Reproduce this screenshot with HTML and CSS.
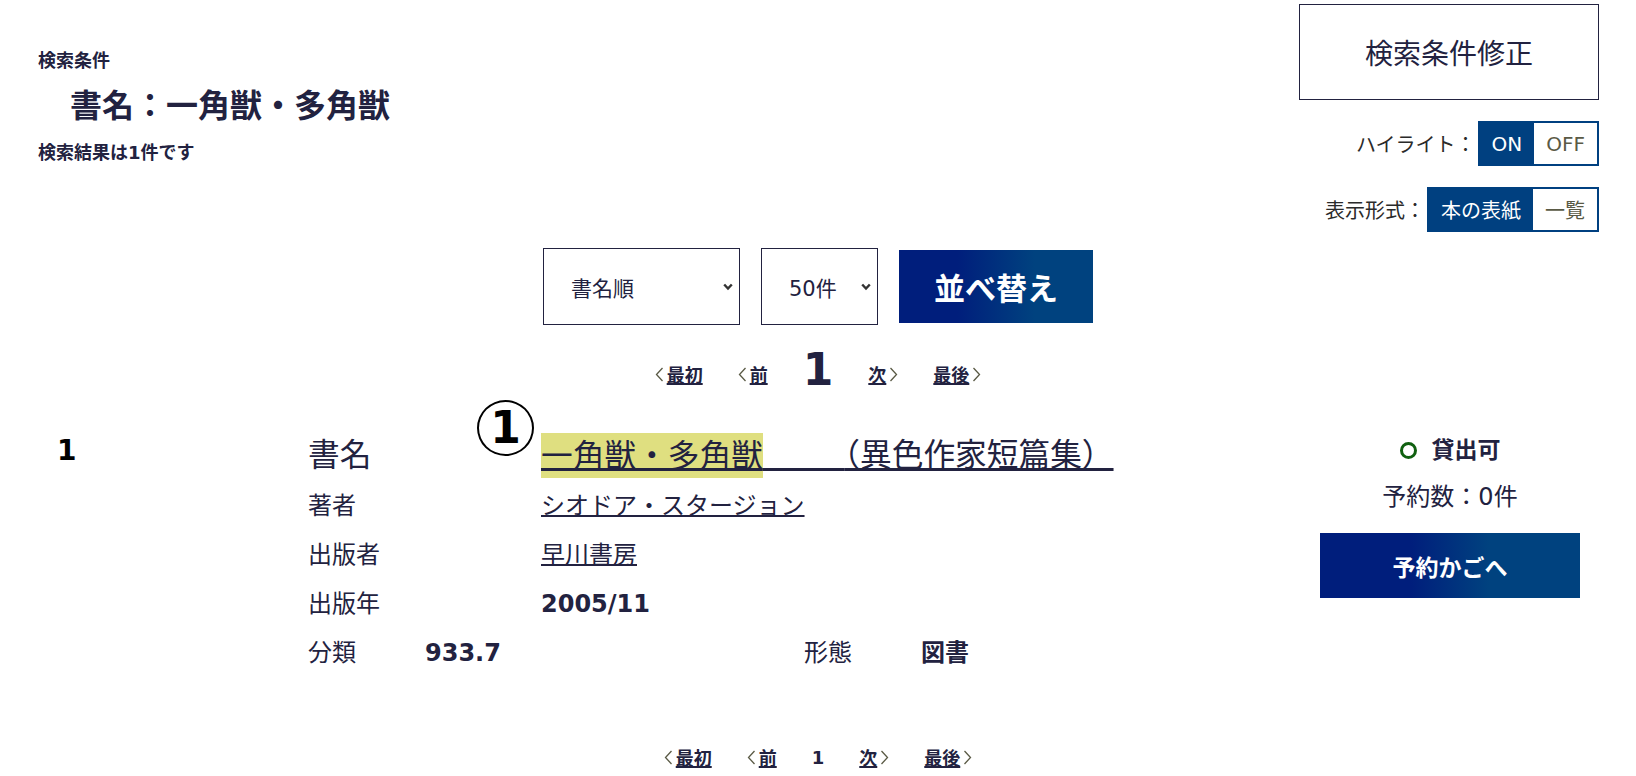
FILE: index.html
```html
<!DOCTYPE html>
<html lang="ja">
<head>
<meta charset="utf-8">
<title>検索結果一覧</title>
<link rel="stylesheet" href="styles.css">
</head>
<body>

<div class="head">
  <div class="cond">
    <div class="cond-caption">検索条件</div>
    <div class="cond-body">書名：一角獣・多角獣</div>
    <div class="cond-hits">検索結果は1件です</div>
  </div>
  <div class="tools">
    <a class="btn-edit" href="#">検索条件修正</a>
    <div class="switch-row">
      <span class="switch-name">ハイライト：</span>
      <span class="switch"><span class="sw-on">ON</span><span class="sw-off">OFF</span></span>
    </div>
    <div class="switch-row">
      <span class="switch-name">表示形式：</span>
      <span class="switch"><span class="sw-on">本の表紙</span><span class="sw-off">一覧</span></span>
    </div>
  </div>
</div>

<div class="sortbar">
  <div class="select sel-order"><span>書名順</span><svg class="chev" viewBox="0 0 10 8"><path d="M1.2 1.5 L5 5.6 L8.8 1.5"/></svg></div>
  <div class="select sel-count"><span>50件</span><svg class="chev" viewBox="0 0 10 8"><path d="M1.2 1.5 L5 5.6 L8.8 1.5"/></svg></div>
  <button class="btn-sort" type="button">並べ替え</button>
</div>

<div class="pager pager-top">
  <a class="pg" href="#"><svg class="arr" viewBox="0 0 9 15"><path d="M7.5 1 L1.5 7.5 L7.5 14"/></svg><span>最初</span></a>
  <a class="pg" href="#"><svg class="arr" viewBox="0 0 9 15"><path d="M7.5 1 L1.5 7.5 L7.5 14"/></svg><span>前</span></a>
  <span class="pg-cur">1</span>
  <a class="pg" href="#"><span>次</span><svg class="arr" viewBox="0 0 9 15"><path d="M1.5 1 L7.5 7.5 L1.5 14"/></svg></a>
  <a class="pg" href="#"><span>最後</span><svg class="arr" viewBox="0 0 9 15"><path d="M1.5 1 L7.5 7.5 L1.5 14"/></svg></a>
</div>

<div class="result">
  <div class="no">1</div>
  <div class="detail">
    <div class="row row-title">
      <span class="lbl">書名</span>
      <span class="val"><span class="mark">1</span><a class="ttl" href="#"><span class="hl">一角獣・多角獣</span><span class="sp">　　</span>（異色作家短篇集）</a></span>
    </div>
    <div class="row">
      <span class="lbl">著者</span>
      <span class="val"><a class="lnk" href="#">シオドア・スタージョン</a></span>
    </div>
    <div class="row">
      <span class="lbl">出版者</span>
      <span class="val"><a class="lnk" href="#">早川書房</a></span>
    </div>
    <div class="row">
      <span class="lbl">出版年</span>
      <span class="val strong">2005/11</span>
    </div>
    <div class="row">
      <span class="lbl-s">分類</span>
      <span class="val-w strong">933.7</span>
      <span class="lbl-s">形態</span>
      <span class="val strong">図書</span>
    </div>
  </div>
  <div class="status">
    <div class="avail"><span class="ring"></span>貸出可</div>
    <div class="resv">予約数：0件</div>
    <a class="btn-cart" href="#">予約かごへ</a>
  </div>
</div>

<div class="pager pager-bottom">
  <a class="pg" href="#"><svg class="arr" viewBox="0 0 9 15"><path d="M7.5 1 L1.5 7.5 L7.5 14"/></svg><span>最初</span></a>
  <a class="pg" href="#"><svg class="arr" viewBox="0 0 9 15"><path d="M7.5 1 L1.5 7.5 L7.5 14"/></svg><span>前</span></a>
  <span class="pg-cur">1</span>
  <a class="pg" href="#"><span>次</span><svg class="arr" viewBox="0 0 9 15"><path d="M1.5 1 L7.5 7.5 L1.5 14"/></svg></a>
  <a class="pg" href="#"><span>最後</span><svg class="arr" viewBox="0 0 9 15"><path d="M1.5 1 L7.5 7.5 L1.5 14"/></svg></a>
</div>

</body>
</html>
```

FILE: styles.css
```css
/* Search result list */

body
{ margin: 0;
font-family: "DejaVu Sans", "Noto Sans CJK JP", sans-serif;
color: #222240;
background: #fff;
}

a
{ color: inherit;
}

/* Header: search condition and view switches */

div.head
{ display: flex;
justify-content: space-between;
align-items: flex-start;
height: 232px;
}

div.cond
{ padding: 48px 0 0 38px;
font-weight: bold;
}

div.cond-caption, div.cond-hits
{ font-size: 18px;
line-height: 26px;
}

div.cond-body
{ margin: 10px 0 12px 32px;
font-size: 32px;
line-height: 44px;
}

div.tools
{ width: 300px;
margin: 4px 37px 0 0;
display: flex;
flex-direction: column;
align-items: flex-end;
gap: 21px;
}

a.btn-edit
{ display: flex;
align-items: center;
justify-content: center;
box-sizing: border-box;
width: 300px;
height: 96px;
border: 1px solid #222240;
font-size: 28px;
text-decoration: none;
}

div.switch-row
{ display: flex;
align-items: center;
gap: 2px;
font-size: 20px;
}

span.switch-name
{ color: #2a2a2a;
}

span.switch
{ display: flex;
box-sizing: border-box;
height: 45px;
border: 2px solid #004080;
}

span.sw-on, span.sw-off
{ display: flex;
align-items: center;
padding: 0 12px;
}

span.sw-on
{ background: #004080;
color: #fff;
}

span.sw-off
{ color: #5a5a45;
}

/* Sort controls */

div.sortbar
{ display: flex;
justify-content: center;
align-items: center;
gap: 21px;
margin-top: 16px;
}

div.select
{ display: flex;
align-items: center;
justify-content: space-between;
box-sizing: border-box;
height: 77px;
padding: 0 6px 0 27px;
border: 1px solid #222240;
font-size: 21px;
}

div.sel-order { width: 197px; }
div.sel-count { width: 117px; }

svg.chev
{ width: 10px;
height: 8px;
fill: none;
stroke: #333;
stroke-width: 2.4;
}

button.btn-sort
{ width: 194px;
height: 73px;
border: 0;
padding: 0;
background: linear-gradient(to right, #001e7c 30%, #00427f 70%);
color: #fff;
font-family: inherit;
font-size: 31px;
font-weight: bold;
}

/* Paging */

div.pager
{ display: flex;
justify-content: center;
align-items: center;
gap: 35px;
font-size: 18px;
font-weight: bold;
}

div.pager-top
{ height: 50px;
margin-top: 20px;
}

div.pager-top a.pg
{ padding-top: 8px;
}

div.pager-bottom
{ height: 30px;
margin-top: 64px;
}

a.pg
{ display: flex;
align-items: center;
gap: 3px;
text-decoration: none;
}

a.pg span
{ text-decoration: underline;
text-decoration-thickness: 2px;
}

svg.arr
{ width: 9px;
height: 15px;
fill: none;
stroke: #5a5a45;
stroke-width: 1.3;
}

div.pager-top span.pg-cur
{ font-size: 44px;
line-height: 50px;
}

/* Result item */

div.result
{ display: flex;
align-items: flex-start;
margin-top: 37px;
padding-left: 57px;
}

div.no
{ width: 251px;
flex: none;
font-size: 28px;
line-height: 38px;
font-weight: bold;
color: #000;
}

div.detail
{ flex: 1;
}

div.row
{ display: flex;
height: 49px;
line-height: 49px;
font-size: 24px;
}

div.row-title
{ height: 46px;
line-height: 46px;
font-size: 31.7px;
margin-bottom: 4px;
}

span.lbl { width: 233px; flex: none; }
span.lbl-s { width: 117px; flex: none; }
span.val-w { width: 379px; flex: none; }
span.val { position: relative; white-space: nowrap; }
span.strong { font-weight: bold; }

a.ttl
{ text-decoration: underline;
text-decoration-thickness: 3px;
}

span.hl
{ background: #dfdf80;
padding: 4.5px 0;
}

span.sp
{ letter-spacing: 9px;
}

a.lnk
{ text-decoration: underline;
text-decoration-thickness: 2px;
}

span.mark
{ position: absolute;
left: -64px;
top: -32px;
box-sizing: border-box;
width: 57px;
height: 56px;
border: 2px solid #000;
border-radius: 50%;
font-size: 44px;
line-height: 52px;
font-weight: bold;
text-align: center;
color: #000;
}

/* Availability and reserve button */

div.status
{ width: 260px;
flex: none;
margin-right: 56px;
text-align: center;
}

div.avail
{ display: flex;
justify-content: center;
align-items: center;
gap: 15px;
font-size: 23px;
font-weight: bold;
line-height: 36px;
}

span.ring
{ box-sizing: border-box;
width: 17px;
height: 17px;
border: 3px solid #106010;
border-radius: 50%;
}

div.resv
{ margin-top: 10.5px;
font-size: 24px;
line-height: 36px;
}

a.btn-cart
{ display: flex;
align-items: center;
justify-content: center;
margin-top: 18.5px;
height: 65px;
background: linear-gradient(to right, #001e7c 35%, #00427f 65%);
color: #fff;
font-size: 23px;
font-weight: bold;
text-decoration: none;
}
```
